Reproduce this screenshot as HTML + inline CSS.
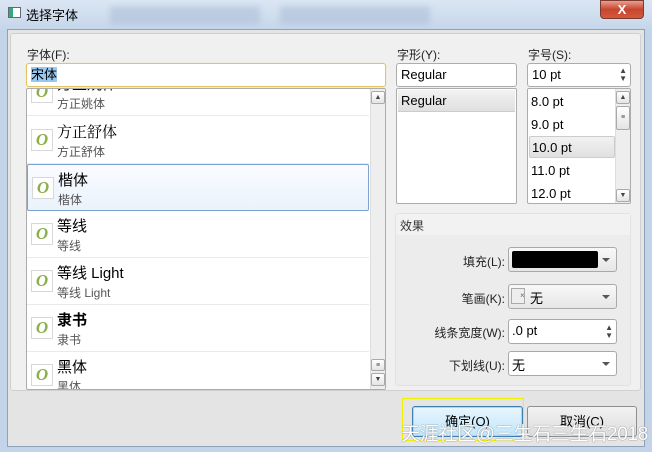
<!DOCTYPE html>
<html><head><meta charset="utf-8"><style>
*{margin:0;padding:0;box-sizing:border-box}
body{width:652px;height:452px;overflow:hidden;position:relative;background:#c3d4e8;font-family:"Liberation Sans","Noto Sans CJK SC",sans-serif;font-size:13px;color:#000}
.a{position:absolute}
.inp{position:absolute;background:#fff;border:1px solid #acacac;border-radius:3px;padding:3px 4px;font-size:13px;line-height:16px}
.lbl{position:absolute;font-size:12px;color:#222}
.item{position:absolute;left:0;width:342px;height:47px;border-bottom:1px solid #eaeaea}
.ic{position:absolute;left:4px;top:12px;width:22px;height:22px;border:1px solid #d8d8d8;background:#fff;color:#8ab04a;font:italic bold 17px "Liberation Serif",serif;text-align:center;line-height:20px}
.t1{position:absolute;left:30px;top:4px;font-size:15px}
.t2{position:absolute;left:30px;top:26px;font-size:12px;color:#555}
.combo{position:absolute;left:508px;width:109px;height:25px;border:1px solid #a9a9a9;border-radius:3px;background:linear-gradient(#f8f8f8,#e6e6e6)}
.arr{position:absolute;right:6px;top:10px;width:0;height:0;border-left:4px solid transparent;border-right:4px solid transparent;border-top:4px solid #555}
.sb{position:absolute;background:#eee;border-left:1px solid #ddd}
.sbtn{position:absolute;width:14px;height:13px;border:1px solid #aaa;border-radius:2px;background:linear-gradient(#fff,#e4e4e4);font-size:7px;line-height:11px;text-align:center;color:#444}
</style></head><body>
<div class="a" style="left:0;top:0;width:652px;height:30px;background:linear-gradient(#dbe6f3,#c5d6ea)"></div>
<div class="a" style="left:110px;top:6px;width:150px;height:18px;background:rgba(150,170,200,.35);filter:blur(3px)"></div>
<div class="a" style="left:280px;top:6px;width:150px;height:18px;background:rgba(150,170,200,.35);filter:blur(3px)"></div>
<div class="a" style="left:8px;top:7px;width:13px;height:11px;border:1px solid #667;background:linear-gradient(90deg,#3a7 0 4px,#fff 4px)"></div>
<div class="a" style="left:26px;top:5px;font-size:13px">选择字体</div>
<div class="a" style="left:600px;top:0;width:44px;height:19px;border:1px solid #7a3a30;border-radius:0 0 4px 4px;background:linear-gradient(#e8a08e,#c8452e 50%,#d25a3d);color:#fff;font:bold 13px 'Liberation Sans';text-align:center;line-height:17px">X</div>
<div class="a" style="left:7px;top:29px;width:638px;height:418px;background:#e4e4e4;border:1px solid #8ea2bb"></div>
<div class="a" style="left:10px;top:33px;width:631px;height:358px;background:#f0f0f0;border:1px solid #d0d0d0;border-radius:3px"></div>
<div class="lbl" style="left:27px;top:46px">字体(F):</div>
<div class="lbl" style="left:397px;top:46px">字形(Y):</div>
<div class="lbl" style="left:528px;top:46px">字号(S):</div>
<div class="inp" style="left:26px;top:63px;width:360px;height:24px;border:1px solid #e5c365;box-shadow:0 0 1px #f3d98c"><span style="background:#99c9ef">宋体</span></div>
<div class="inp" style="left:396px;top:63px;width:121px;height:24px">Regular</div>
<div class="inp" style="left:527px;top:63px;width:104px;height:24px">10 pt<span class="a" style="right:3px;top:3px;font-size:8px;line-height:8px;color:#444">▲<br>▼</span></div>
<div class="a" style="left:26px;top:88px;width:360px;height:302px;background:#fff;border:1px solid #acacac;border-radius:2px;overflow:hidden">
 <div class="a" style="left:0;top:-20px;width:343px;height:330px">
  <div class="item" style="top:0"><div class="ic">O</div><div class="t1">方正姚体</div><div class="t2">方正姚体</div></div>
  <div class="item" style="top:48px"><div class="ic">O</div><div class="t1" style="font-family:'Noto Serif CJK SC',serif">方正舒体</div><div class="t2">方正舒体</div></div>
  <div class="item" style="top:95px;border:1px solid #7da2ce;border-radius:2px;background:linear-gradient(#fafcff,#eaf2fc)"><div class="ic">O</div><div class="t1">楷体</div><div class="t2">楷体</div></div>
  <div class="item" style="top:142px"><div class="ic">O</div><div class="t1">等线</div><div class="t2">等线</div></div>
  <div class="item" style="top:189px"><div class="ic">O</div><div class="t1">等线 Light</div><div class="t2">等线 Light</div></div>
  <div class="item" style="top:236px"><div class="ic">O</div><div class="t1" style="font-weight:bold">隶书</div><div class="t2">隶书</div></div>
  <div class="item" style="top:283px"><div class="ic">O</div><div class="t1">黑体</div><div class="t2">黑体</div></div>
 </div>
 <div class="sb" style="left:343px;top:0;width:16px;height:300px"></div>
 <div class="sbtn" style="left:344px;top:2px">▲</div>
 <div class="sbtn" style="left:344px;top:270px;height:12px">≡</div>
 <div class="sbtn" style="left:344px;top:284px">▼</div>
</div>
<div class="a" style="left:396px;top:88px;width:121px;height:116px;background:#fff;border:1px solid #acacac;border-radius:2px">
 <div class="a" style="left:1px;top:1px;width:117px;height:22px;background:linear-gradient(#f2f2f2,#e0e0e0);border-bottom:1px solid #ccc;padding:3px 3px;font-size:13px">Regular</div>
</div>
<div class="a" style="left:527px;top:88px;width:104px;height:116px;background:#fff;border:1px solid #acacac;border-radius:2px;overflow:hidden;font-size:13px">
 <div class="a" style="left:3px;top:5px">8.0 pt</div>
 <div class="a" style="left:3px;top:28px">9.0 pt</div>
 <div class="a" style="left:1px;top:47px;width:86px;height:22px;background:linear-gradient(#f2f2f2,#e0e0e0);border:1px solid #ccc;border-radius:2px;padding:3px 2px">10.0 pt</div>
 <div class="a" style="left:3px;top:74px">11.0 pt</div>
 <div class="a" style="left:3px;top:97px">12.0 pt</div>
 <div class="sb" style="left:87px;top:0;width:16px;height:116px"></div>
 <div class="sbtn" style="left:88px;top:2px">▲</div>
 <div class="sbtn" style="left:88px;top:17px;height:24px;line-height:22px">≡</div>
 <div class="sbtn" style="left:88px;top:100px">▼</div>
</div>
<div class="a" style="left:395px;top:213px;width:236px;height:173px;background:#ececec;border:1px solid #e2e2e2;border-radius:3px"></div>
<div class="a" style="left:396px;top:214px;width:234px;height:21px;background:#f2f2f2"></div>
<div class="lbl" style="left:400px;top:217px;color:#333">效果</div>
<div class="lbl" style="left:400px;top:253px;width:105px;text-align:right">填充(L):</div>
<div class="combo" style="top:247px"><div class="a" style="left:3px;top:3px;width:86px;height:17px;background:#000;border-radius:2px"></div><div class="arr"></div></div>
<div class="lbl" style="left:400px;top:290px;width:105px;text-align:right">笔画(K):</div>
<div class="combo" style="top:284px"><div class="a" style="left:2px;top:3px;width:14px;height:16px;border:1px solid #aaa;background:#eee"></div><span class="a" style="left:11px;top:6px;font-size:8px;color:#666">×</span><span class="a" style="left:21px;top:3px">无</span><div class="arr"></div></div>
<div class="lbl" style="left:400px;top:324px;width:105px;text-align:right">线条宽度(W):</div>
<div class="combo" style="top:319px;background:#fff"><span class="a" style="left:3px;top:3px">.0 pt</span><span class="a" style="right:3px;top:4px;font-size:8px;line-height:8px;color:#444">▲<br>▼</span></div>
<div class="lbl" style="left:400px;top:357px;width:105px;text-align:right">下划线(U):</div>
<div class="combo" style="top:351px;background:#fff"><span class="a" style="left:3px;top:3px">无</span><div class="arr"></div></div>
<div class="a" style="left:412px;top:406px;width:111px;height:31px;border:1px solid #3c7fb1;border-radius:3px;background:linear-gradient(#eaf6fd,#bee6fd);box-shadow:inset 0 0 0 1px #a6d8f5;text-align:center;line-height:29px;font-size:13px">确定(O)</div>
<div class="a" style="left:527px;top:406px;width:110px;height:31px;border:1px solid #8e8f8f;border-radius:3px;background:linear-gradient(#f2f2f2,#dcdcdc);text-align:center;line-height:29px;font-size:13px">取消(C)</div>
<div class="a" style="left:402px;top:398px;width:122px;height:43px;border:1px solid #f0f000"></div>
<div class="a" style="left:401px;top:419px;font-size:19px;color:#fff;white-space:nowrap;letter-spacing:-0.3px;text-shadow:0 0 1px #888,0 0 1px #888">天涯社区@三生石三生石2018</div>
</body></html>
